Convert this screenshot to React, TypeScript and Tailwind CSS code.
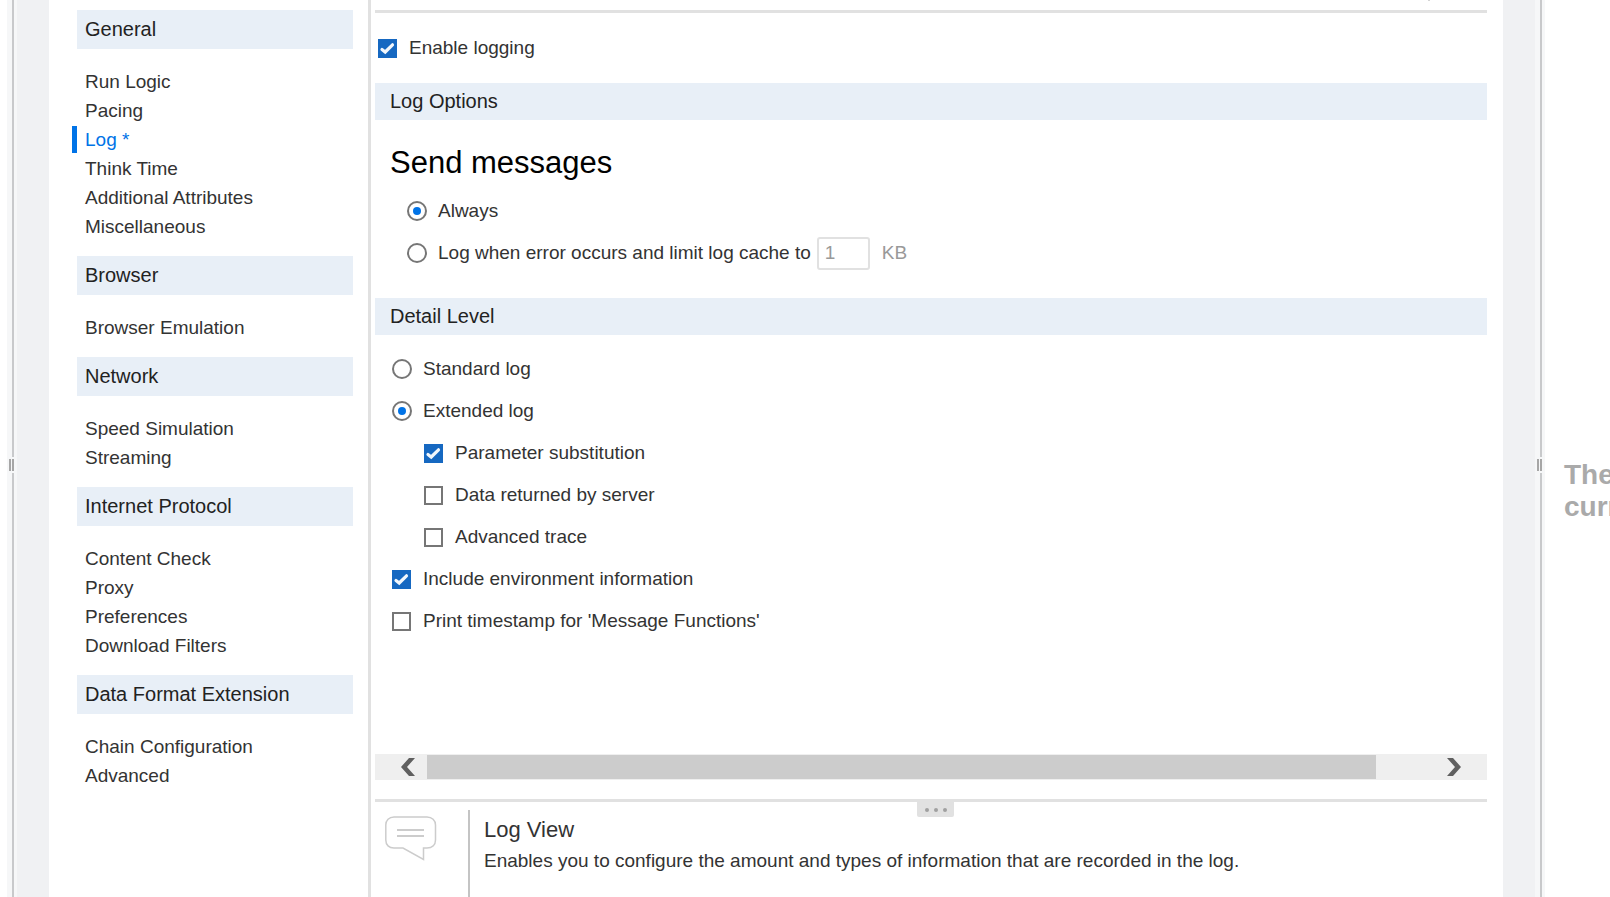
import { type ReactNode } from 'react';

const SECTIONS = [
  {
    title: 'General',
    items: ['Run Logic', 'Pacing', 'Log *', 'Think Time', 'Additional Attributes', 'Miscellaneous'],
  },
  { title: 'Browser', items: ['Browser Emulation'] },
  { title: 'Network', items: ['Speed Simulation', 'Streaming'] },
  { title: 'Internet Protocol', items: ['Content Check', 'Proxy', 'Preferences', 'Download Filters'] },
  { title: 'Data Format Extension', items: ['Chain Configuration', 'Advanced'] },
];

const ACTIVE_ITEM = 'Log *';

function Sidebar() {
  return (
    <nav className="w-[319px] shrink-0 pt-[10px] pl-[23px] pr-[15px]">
      {SECTIONS.map((section) => (
        <section key={section.title} className="pb-[15px]">
          <h2 className="ml-[5px] h-[39px] bg-[#e8eff7] pl-2 text-[20px] leading-[38px] text-[#222]">
            {section.title}
          </h2>
          <ul className="pt-[18px]">
            {section.items.map((item) => (
              <li key={item} className="flex h-[29px] items-center">
                <a
                  href="#"
                  className={
                    item === ACTIVE_ITEM
                      ? 'block w-full border-l-[5px] border-[#0073e7] pl-2 leading-[27px] text-[#0073e7]'
                      : 'block w-full border-l-[5px] border-transparent pl-2 leading-[27px]'
                  }
                >
                  {item}
                </a>
              </li>
            ))}
          </ul>
        </section>
      ))}
    </nav>
  );
}

function Checkbox({ label, checked = false }: { label: string; checked?: boolean }) {
  return (
    <label className="flex h-[42px] items-center gap-3">
      <span className="relative flex size-[19px]">
        <input
          type="checkbox"
          defaultChecked={checked}
          className="peer size-[19px] appearance-none border-2 border-[#767676] bg-white checked:border-[#1668c1] checked:bg-[#1668c1]"
        />
        <svg
          viewBox="0 0 19 19"
          className="pointer-events-none absolute inset-0 hidden size-[19px] peer-checked:block"
          fill="none"
          stroke="#f2f7fc"
          strokeWidth="3.2"
          strokeLinecap="round"
        >
          <path d="M4 10.500 L7.200 13 L14.500 5.800" />
        </svg>
      </span>
      {label}
    </label>
  );
}

function Radio({ name, label, checked = false }: { name: string; label: string; checked?: boolean }) {
  return (
    <label className="flex h-[42px] items-center gap-[11px]">
      <span className="relative flex size-5">
        <input
          type="radio"
          name={name}
          defaultChecked={checked}
          className="peer size-5 appearance-none rounded-full border-2 border-[#767676] bg-white"
        />
        <span className="pointer-events-none absolute inset-[6px] hidden rounded-full bg-[#0073e7] peer-checked:block" />
      </span>
      {label}
    </label>
  );
}

function Heading({ children }: { children: ReactNode }) {
  return <h2 className="h-[37px] bg-[#e8eff7] pl-[15px] text-[20px] leading-9 text-[#222]">{children}</h2>;
}

function Splitter() {
  return (
    <div className="flex w-[10px] shrink-0 flex-col bg-[#f6f7f8]">
      <div className="ml-[5px] w-[2px] grow basis-8 bg-[#c8c9cb]" />
      <div className="flex h-4 gap-px py-[2px] pl-[2px]">
        <span className="w-[2px] bg-[#a6a6a6]" />
        <span className="w-[2px] bg-[#a6a6a6]" />
      </div>
      <div className="ml-[5px] w-[2px] grow basis-0 bg-[#c8c9cb]" />
    </div>
  );
}

function ScrollBar() {
  return (
    <div className="flex h-[26px] bg-[#efefef] py-px">
      <button type="button" aria-label="Scroll left" className="flex w-[52px] items-center justify-end pr-3">
        <svg width="14" height="18" viewBox="0 0 14 18" fill="#606060">
          <path d="M8 0H14L6 9L14 18H8L0 9Z" />
        </svg>
      </button>
      <div className="flex flex-1">
        <div className="w-[94%] bg-[#cccccc]" />
      </div>
      <button type="button" aria-label="Scroll right" className="flex w-[50px] items-center justify-start pl-[10px]">
        <svg width="14" height="18" viewBox="0 0 14 18" fill="#606060">
          <path d="M0 0H6L14 9L6 18H0L8 9Z" />
        </svg>
      </button>
    </div>
  );
}

function LogPanel() {
  return (
    <main className="flex min-w-0 flex-1 flex-col pl-1 pr-4">
      <div className="flex h-[13px] justify-end border-b-[3px] border-[#e1e1e1] pr-[57px]">
        <span className="h-px w-[2px] bg-[#d4d4d4]" />
      </div>
      <div className="pt-[14px] pb-[14px] pl-[3px]">
        <Checkbox label="Enable logging" checked />
      </div>
      <Heading>Log Options</Heading>
      <div className="pt-[22px] pb-6 pl-[15px]">
        <fieldset>
          <legend className="text-[31px] leading-[42px] text-black">Send messages</legend>
          <div className="pt-[6px] pl-[17px]">
            <Radio name="send" label="Always" checked />
            <div className="flex items-center gap-[6px]">
              <Radio name="send" label="Log when error occurs and limit log cache to" />
              <label className="flex items-center gap-3 text-[#999]">
                <input
                  type="text"
                  aria-label="Log cache limit"
                  defaultValue="1"
                  disabled
                  className="h-[33px] w-[53px] rounded-[3px] border-2 border-[#e1e1e1] bg-white px-[6px]"
                />
                KB
              </label>
            </div>
          </div>
        </fieldset>
      </div>
      <Heading>Detail Level</Heading>
      <div className="pt-[13px] pl-[17px]">
        <Radio name="detail" label="Standard log" />
        <Radio name="detail" label="Extended log" checked />
        <div className="pl-8">
          <Checkbox label="Parameter substitution" checked />
          <Checkbox label="Data returned by server" />
          <Checkbox label="Advanced trace" />
        </div>
        <Checkbox label="Include environment information" checked />
        <Checkbox label="Print timestamp for 'Message Functions'" />
      </div>
      <div className="pt-[112px]">
        <ScrollBar />
      </div>
      <Description />
    </main>
  );
}

function Description() {
  return (
    <footer className="mt-[19px] flex flex-1 flex-col border-t-[3px] border-[#e1e1e1]">
      <div className="relative flex flex-1 pt-2 pl-[10px]">
        <button
          type="button"
          aria-label="Resize description"
          className="absolute top-0 left-1/2 flex h-[15px] w-[37px] -translate-x-[14px] items-center justify-center gap-[5px] rounded-b-[2px] bg-[#e1e1e1]"
        >
          <span className="size-1 rounded-full bg-[#a0a0a0]" />
          <span className="size-1 rounded-full bg-[#a0a0a0]" />
          <span className="size-1 rounded-full bg-[#a0a0a0]" />
        </button>
        <svg width="52" height="46" viewBox="0 0 52 46" fill="none" stroke="#cccccc" className="mt-[6px] shrink-0">
          <path
            strokeWidth="1.5"
            d="M9 1H42C47 1 50.500 4.500 50.500 9V24C50.500 29 47 32 42 32H38.500V43.500L18 32H9C4 32 .8 29 .8 24V9C.8 4.500 4 1 9 1Z"
          />
          <path strokeWidth="2" d="M12 14H39M12 20H39" />
        </svg>
        <div className="ml-[31px] flex-1 border-l-2 border-[#c4c4c4] pl-[14px]">
          <h2 className="pt-1 text-[22px] leading-8">Log View</h2>
          <p className="leading-[30px]">
            Enables you to configure the amount and types of information that are recorded in the log.
          </p>
        </div>
      </div>
    </footer>
  );
}

export default function App() {
  return (
    <div className="flex min-h-screen overflow-hidden bg-white pl-[7px] font-['Liberation_Sans',Arial,sans-serif] text-[19px] text-[#333]">
      <Splitter />
      <div className="w-8 shrink-0 bg-[#f0f1f3]" />
      <Sidebar />
      <div className="w-[3px] shrink-0 bg-[#e1e1e1]" />
      <LogPanel />
      <div className="w-8 shrink-0 bg-[#f0f1f3]" />
      <Splitter />
      <aside className="flex w-[65px] shrink-0 flex-col justify-center overflow-hidden pl-[19px] pt-[84px] text-[28px] leading-8 font-bold text-[#aaa]">
        <span>The</span>
        <span>curr</span>
      </aside>
    </div>
  );
}
